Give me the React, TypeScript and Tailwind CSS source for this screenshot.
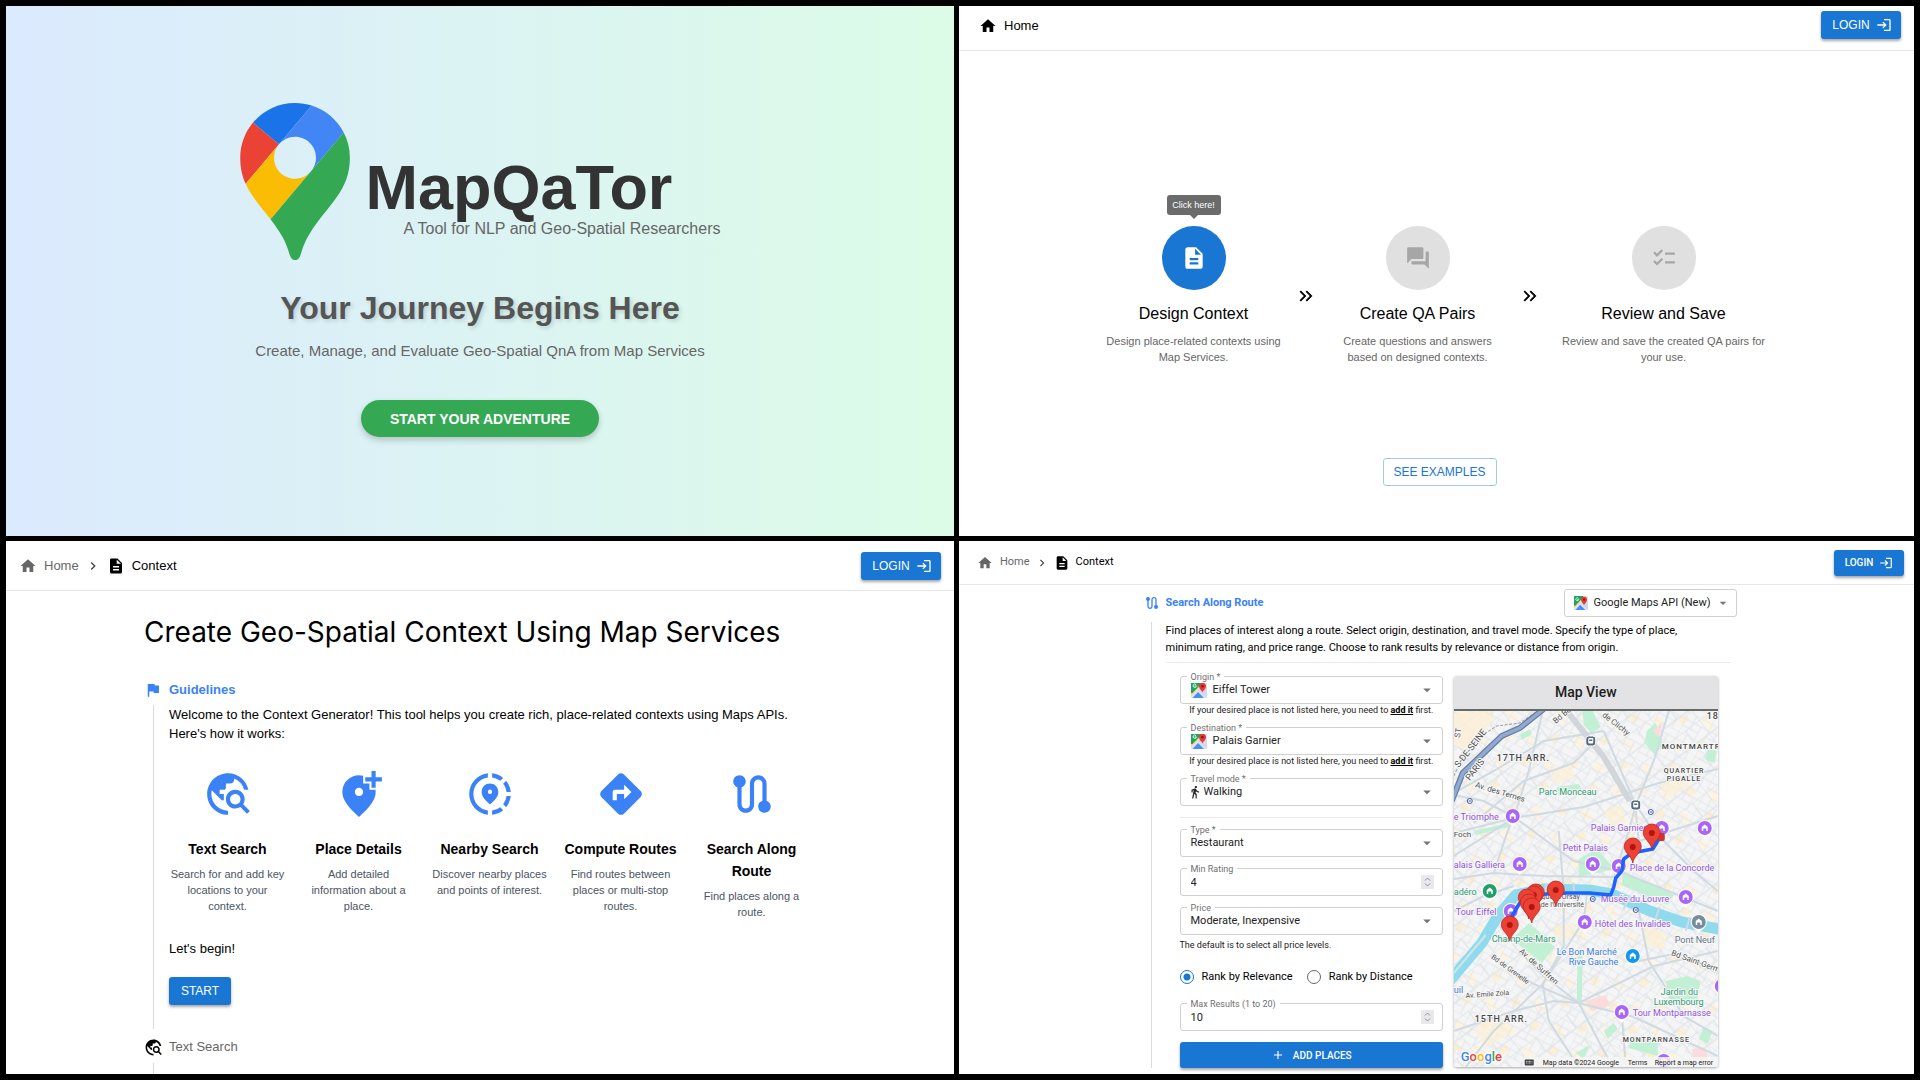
import React from "react";
import type { ReactNode } from "react";
import type { IconType } from "react-icons";
import {
  MdAdd,
  MdAddLocationAlt,
  MdArrowDropDown,
  MdChecklist,
  MdChevronRight,
  MdDescription,
  MdDirections,
  MdDirectionsWalk,
  MdFlag,
  MdHome,
  MdKeyboardDoubleArrowRight,
  MdLogin,
  MdQuestionAnswer,
  MdRoute,
  MdShareLocation,
  MdTravelExplore,
} from "react-icons/md";

/* ---------- Welcome ---------- */

function PinLogo() {
  return (
    <svg viewBox="0 0 92.3 132.3" className="h-[157px] w-[110px] shrink-0" aria-hidden="true">
      <path fill="#1a73e8" d="M60.2 2.2C55.8.8 51 0 46.1 0 32 0 19.3 6.4 10.8 16.5l21.8 18.3L60.2 2.2z" />
      <path fill="#ea4335" d="M10.8 16.5C4.1 24.5 0 34.9 0 46.1c0 8.7 1.7 15.7 4.6 22l28-33.3-21.8-18.3z" />
      <path fill="#4285f4" d="M46.2 28.5c9.8 0 17.7 7.9 17.7 17.7 0 4.3-1.6 8.3-4.2 11.4 0 0 13.9-16.6 27.5-32.7-5.6-10.8-15.3-19-27-22.7L32.6 34.8c3.3-3.8 8.1-6.3 13.6-6.3" />
      <path fill="#fbbc04" d="M46.2 63.8c-9.8 0-17.7-7.9-17.7-17.7 0-4.3 1.5-8.3 4.1-11.3l-28 33.3c4.8 10.6 12.8 19.2 21 29.9l34.1-40.5c-3.3 3.9-8.1 6.3-13.5 6.3" />
      <path fill="#34a853" d="M59.1 109.2c15.4-24.1 33.3-35 33.3-63 0-7.7-1.9-14.9-5.2-21.3L25.6 98c2.6 3.4 5.3 7.3 7.9 11.3 9.4 14.5 6.8 23.1 12.8 23.1s3.4-8.7 12.8-23.2" />
    </svg>
  );
}

function WelcomePanel() {
  return (
    <section className="flex min-h-0 flex-col items-center justify-center overflow-hidden bg-linear-to-r from-[#dbeafe] to-[#dcfce7] pb-[2px]">
      <div className="flex items-end gap-4">
        <PinLogo />
        <div className="pb-[21px]">
          <h1 className="text-[63px] leading-[64px] font-bold text-[#333]">MapQaTor</h1>
          <p className="ml-[38px] text-base leading-5 text-[#666]">A Tool for NLP and Geo-Spatial Researchers</p>
        </div>
      </div>
      <h2 className="mt-7 text-[32px] leading-10 font-bold text-[#555] [text-shadow:2px_2px_4px_rgba(0,0,0,0.15)]">
        Your Journey Begins Here
      </h2>
      <p className="mt-[11px] mb-px text-[15px] leading-6 text-[#666]">
        Create, Manage, and Evaluate Geo-Spatial QnA from Map Services
      </p>
      <button className="mt-9 h-[37px] w-[238px] rounded-full bg-[#34a853] text-sm font-bold text-white shadow-[0_3px_6px_rgba(0,0,0,0.2)]">
        START YOUR ADVENTURE
      </button>
    </section>
  );
}

/* ---------- Shared navigation ---------- */

function LoginButton({ compact = false }: { compact?: boolean }) {
  return (
    <button
      className={
        "flex items-center justify-center rounded-[3px] bg-[#1976d2] text-white shadow-[0_2px_3px_rgba(0,0,0,0.35)] " +
        (compact ? "h-[26px] w-[70px] gap-[6px] text-[10px] font-medium" : "h-7 w-20 gap-[6px] pl-[2px] text-xs")
      }
    >
      LOGIN
      <MdLogin className={compact ? "size-[14px]" : "size-4"} aria-hidden="true" />
    </button>
  );
}

function HomePanel() {
  return (
    <section className="flex min-h-0 flex-col overflow-hidden bg-white">
      <header className="flex h-[45px] shrink-0 items-center justify-between border-b border-[#e5e7eb] pr-[13px] pl-5">
        <a href="#home" className="flex items-center gap-[7px] pb-1 text-[13px] text-black">
          <MdHome className="size-[18px]" aria-hidden="true" />
          Home
        </a>
        <div className="pb-[6px]">
          <LoginButton />
        </div>
      </header>
      <div className="flex flex-col items-center pt-[175px] pl-[6px]">
        <div className="flex items-center">
          <Step icon={MdDescription} title="Design Context" text={"Design place-related contexts using\nMap Services."} tip="Click here!" />
          <MdKeyboardDoubleArrowRight className="size-6 p-px text-black" aria-hidden="true" />
          <Step icon={MdQuestionAnswer} title="Create QA Pairs" text={"Create questions and answers\nbased on designed contexts."} />
          <MdKeyboardDoubleArrowRight className="size-6 p-px text-black" aria-hidden="true" />
          <Step wide icon={MdChecklist} title="Review and Save" text={"Review and save the created QA pairs for\nyour use."} />
        </div>
        <button className="mt-[93px] h-7 w-[114px] rounded-[3px] border border-[#a3c8ed] text-xs text-[#1976d2]">
          SEE EXAMPLES
        </button>
      </div>
    </section>
  );
}

function Step({ icon: Icon, title, text, tip, wide = false }: { icon: IconType; title: string; text: string; tip?: string; wide?: boolean }) {
  return (
    <div className={"flex flex-col items-center " + (wide ? "w-[244px]" : "w-[200px]")}>
      <div className="relative">
        <button
          aria-label={title}
          disabled={!tip}
          className={
            "flex size-16 items-center justify-center rounded-full " +
            (tip ? "bg-[#1976d2] text-white" : "bg-[#e0e0e0] text-[#a6a6a6]")
          }
        >
          <Icon className="size-[26px]" aria-hidden="true" />
        </button>
        {tip && (
          <div role="tooltip" className="absolute bottom-[75px] left-1/2 w-[54px] -translate-x-1/2 rounded-[3px] bg-[#6b6b6b] text-center text-[9px] leading-5 whitespace-nowrap text-white after:absolute after:top-full after:left-1/2 after:-translate-x-1/2 after:border-x-4 after:border-t-4 after:border-x-transparent after:border-t-[#6b6b6b]">
            {tip}
          </div>
        )}
      </div>
      <h3 className="mt-3 text-base leading-6 text-black">{title}</h3>
      <p className="mt-[7px] text-center text-[11px] leading-4 whitespace-pre-line text-[#666]">{text}</p>
    </div>
  );
}

/* ---------- Context guidelines ---------- */

const TOOLS: { icon: IconType; title: string; text: string }[] = [
  { icon: MdTravelExplore, title: "Text Search", text: "Search for and add key locations to your context." },
  { icon: MdAddLocationAlt, title: "Place Details", text: "Add detailed information about a place." },
  { icon: MdShareLocation, title: "Nearby Search", text: "Discover nearby places and points of interest." },
  { icon: MdDirections, title: "Compute Routes", text: "Find routes between places or multi-stop routes." },
  { icon: MdRoute, title: "Search Along Route", text: "Find places along a route." },
];

function GuidelinesPanel() {
  return (
    <section className="flex min-h-0 flex-col overflow-hidden bg-white">
      <header className="flex h-[50px] shrink-0 items-center justify-between border-b border-[#e5e7eb] px-[13px]">
        <nav aria-label="Breadcrumb" className="flex items-center text-[13px]">
          <a href="#home" className="flex items-center gap-[7px] text-[#666]">
            <MdHome className="size-[18px]" aria-hidden="true" />
            Home
          </a>
          <MdChevronRight className="mx-[6px] size-4 text-[#444]" aria-hidden="true" />
          <a href="#context" className="flex items-center gap-[7px] text-black">
            <MdDescription className="size-[18px]" aria-hidden="true" />
            Context
          </a>
        </nav>
        <LoginButton />
      </header>
      <div className="mx-auto w-full max-w-[672px] pt-[21px]">
        <h1 className="text-[28px] leading-10 whitespace-nowrap text-black font-['Inter',sans-serif]">
          Create Geo-Spatial Context Using Map Services
        </h1>
        <div className="mt-7 flex h-5 items-center gap-[7px] text-[13px] font-bold text-[#3b82f6]">
          <MdFlag className="size-[18px]" aria-hidden="true" />
          <h2>Guidelines</h2>
        </div>
        <div className="mt-[5px] ml-[9px] border-l border-[#dadada] pb-6 pl-[15px] text-[13px] text-black">
          <p className="leading-[19px]">
            Welcome to the Context Generator! This tool helps you create rich, place-related contexts using Maps APIs.
            <br />
            Here&#39;s how it works:
          </p>
          <div className="mt-[26px] mr-[6px] grid grid-cols-5 gap-[14px]">
            {TOOLS.map(({ icon: Icon, title, text }) => (
              <div key={title} className="flex flex-col items-center text-center">
                <Icon className="size-[50px] text-[#3b82f6]" aria-hidden="true" />
                <h3 className="mt-[19px] text-sm leading-[22px] font-bold">{title}</h3>
                <p className="mt-[6px] text-[11px] leading-4 text-[#4b5563]">{text}</p>
              </div>
            ))}
          </div>
          <p className="mt-[19px] leading-5">Let&#39;s begin!</p>
          <button className="mt-[18px] block h-7 w-[62px] rounded-[3px] bg-[#1976d2] text-xs text-white shadow-[0_2px_3px_rgba(0,0,0,0.35)]">
            START
          </button>
        </div>
        <div className="mt-2 flex h-5 items-center gap-[6px] text-[13px] text-[#666]">
          <MdTravelExplore className="size-[19px] text-black" aria-hidden="true" />
          <h2>Text Search</h2>
        </div>
        <div className="mt-[6px] ml-[9px] h-8 border-l border-[#dadada]" />
      </div>
    </section>
  );
}

/* ---------- Route search ---------- */

function MapsBadge({ className }: { className: string }) {
  return (
    <svg viewBox="0 0 32 32" className={className} aria-hidden="true">
      <rect width="32" height="32" rx="2" fill="#dfe3f3" />
      <path d="M0 2a2 2 0 0 1 2-2h20L0 22z" fill="#1fa463" />
      <path d="M0 20 20 0h7L0 28z" fill="#fbd75b" />
      <path d="M0 2a2 2 0 0 1 2-2h19v3L3 22H0z" fill="#1fa463" />
      <path d="M3 32 14 20l12 12z" fill="#4a8df6" />
      <path d="M14 16 32 32V12L22 8z" fill="#d3d8ee" />
      <path d="M10 5.200a3.300 3.300 0 1 0 .8 2.600H7.500" fill="none" stroke="#fff" strokeWidth="1.800" />
      <path d="M23 21c-1-4-7-7-7-12.500a7 7 0 0 1 14 0C30 14 24 17 23 21z" fill="#e53935" />
      <circle cx="23" cy="8.500" r="2.600" fill="#8f1a1a" />
    </svg>
  );
}

function Outlined({ id, label, children }: { id: string; label: string; children: ReactNode }) {
  return (
    <div className="relative flex h-7 items-center rounded-[3px] border border-[#d0d0d0] px-[10px]">
      <label htmlFor={id} className="absolute -top-[6px] left-[6px] bg-white px-1 text-[9px] leading-3 text-[#707070]">
        {label}
      </label>
      {children}
    </div>
  );
}

function SelectField({ id, label, value, icon }: { id: string; label: string; value: string; icon?: ReactNode }) {
  return (
    <Outlined id={id} label={label}>
      {icon}
      <select id={id} defaultValue={value} className="h-full min-w-0 flex-1 appearance-none bg-transparent text-[11px] text-[#222] outline-none">
        <option>{value}</option>
      </select>
      <MdArrowDropDown className="pointer-events-none -mr-1 size-[18px] text-[#757575]" aria-hidden="true" />
    </Outlined>
  );
}

function NumberField({ id, label, value }: { id: string; label: string; value: number }) {
  return (
    <Outlined id={id} label={label}>
      <input id={id} type="number" defaultValue={value} className="h-full min-w-0 flex-1 [appearance:textfield] bg-transparent text-[11px] text-[#222] outline-none" />
      <svg viewBox="0 0 13 14" className="-mr-[2px] h-[14px] w-[13px]" aria-hidden="true">
        <rect width="13" height="14" fill="#e9e9ed" />
        <path d="M4 5.500 6.500 3 9 5.500M4 8.500 6.500 11 9 8.500" fill="none" stroke="#8f8f9d" />
      </svg>
    </Outlined>
  );
}

function PlaceHint() {
  return (
    <p className="mb-[11px] text-center text-[9px] leading-3 whitespace-nowrap text-[#222]">
      If your desired place is not listed here, you need to{" "}
      <a href="#add-place" className="font-bold text-black underline">
        add it
      </a>{" "}
      first.
    </p>
  );
}

function RankOption({ label, checked = false }: { label: string; checked?: boolean }) {
  return (
    <label className="flex items-center gap-2 text-[11px] text-black">
      <input
        type="radio"
        name="rank"
        defaultChecked={checked}
        className="size-[14px] appearance-none rounded-full border border-[#666] checked:border-[#1976d2] checked:bg-[radial-gradient(circle,#1976d2_3px,transparent_4px)]"
      />
      {label}
    </label>
  );
}

const MAJOR_ROADS = [
  "M0 122 60 107 130 96 205 72 264 58",
  "M0 82 40 60 90 30 150 20",
  "M20 112 70 70 120 52 142 30",
  "M0 168 40 162 90 165 160 166",
  "M40 162 59 105 30 90 0 84",
  "M59 105 120 150 165 160 264 200",
  "M160 166 175 120 182 94 200 50 215 0",
  "M150 20 182 94 200 120 240 160 264 180",
  "M113 0 160 58 182 100 185 130",
  "M0 145 60 107 75 60 89 0",
  "M37 245 80 273 125 292 180 306 264 345",
  "M65 240 90 265 125 292 150 340 160 356",
  "M89 273 130 210 133 184",
  "M0 320 60 300 100 290 125 292 200 255 264 240",
  "M89 273 95 310 125 356",
  "M185 200 195 250 230 305 264 325",
  "M168 300 172 356",
  "M185 250 220 243 264 262",
  "M105 120 110 180 110 235 89 273",
  "M185 130 264 105",
  "M0 200 30 185 60 175",
  "M12 356 40 320 89 273",
];

const PURPLE_PINS: [number, number][] = [
  [59, 105],
  [208, 117],
  [251, 117],
  [139, 153],
  [165, 155],
  [66, 153],
  [232, 186],
  [57, 200],
  [131, 211],
  [168, 301],
  [268, 275],
  [210, 350],
];

const MARKERS: [number, number][] = [
  [198, 122],
  [179, 136],
  [102, 179],
  [82, 182],
  [80, 184],
  [73, 187],
  [75, 192],
  [78, 196],
  [56, 214],
];

function PoiPin({ x, y, color }: { x: number; y: number; color: string }) {
  return (
    <g transform={`translate(${x} ${y})`}>
      <path d="M0 11C-2 8-8 6-8 0a8 8 0 0 1 16 0C8 6 2 8 0 11z" fill="#fff" />
      <circle r="7" fill={color} />
      <path d="M-3 3V-1L0-3.500 3-1V3H1.500V0.500H-1.500V3z" fill="#fff" />
    </g>
  );
}

function ParisMap() {
  return (
    <svg viewBox="0 0 264 356" preserveAspectRatio="xMidYMid slice" className="block h-[356px] w-full font-['Roboto',sans-serif]" role="img" aria-label="Map of Paris with route and places">
      <defs>
        <pattern id="blocksA" width="26" height="22" patternUnits="userSpaceOnUse" patternTransform="rotate(28)">
          <path d="M0 0H26M0 8H26M0 15H18M0 0V22M9 0V15M18 8V22" fill="none" stroke="#dfe4ea" strokeWidth="0.900" />
        </pattern>
        <pattern id="blocksB" width="38" height="31" patternUnits="userSpaceOnUse" patternTransform="rotate(-37)">
          <path d="M0 0H38M0 17H38M0 0V31M21 0V17" fill="none" stroke="#d9dfe6" />
          <rect x="22" y="18" width="9" height="7" fill="#fcefd4" />
          <rect x="2" y="2" width="7" height="12" fill="#fdf3df" />
        </pattern>
      </defs>
      <rect width="264" height="356" fill="#f5f5f5" />
      <rect width="264" height="356" fill="url(#blocksB)" />
      <rect width="264" height="356" fill="url(#blocksA)" />

      <g fill="#fcefd4">
        <path d="M0 3 30 0 42 8 10 38 0 34z" opacity="0.800" />
        <path d="M95 60l22-6 4 12-20 8zM206 70l24-8 6 14-22 10zM150 100l18-6 5 18-16 4zM20 318l26-14 10 18-24 16zM100 215l20-3 2 14-18 4zM188 215l26 8-4 16-20-6z" opacity="0.700" />
      </g>
      <g fill="#c2f0d4">
        <path d="M129 0h10l8 16-9 6-8-8z" />
        <path d="M193 20 202 12 210 35 200 43 191 32z" />
        <path d="M253 38l10 2-2 12-9-3z" />
        <path d="M66 24l10-6 2 5-10 6z" />
        <path d="M103 76l22-3 4 8-24 4z" />
        <path d="M20 120l35-8v4l-33 8z" />
        <path d="M125 148l18-10 18 20-36 8z" />
        <path d="M169 160 220 184 214 194 168 174z" />
        <path d="M58 228 76 212 101 236 88 252z" />
        <path d="M212 270 234 265 247 270 243 290 216 292z" />
        <path d="M178 325 204 331 204 345 175 337z" />
        <path d="M124 240h5l-1 50h-5z" />
        <path d="M250 316l9 4-5 13-9-5z" />
        <path d="M150 320l10-8 4 6-10 10z" />
        <path d="M122 342l14-8-6 14z" />
      </g>
      <g fill="#fbdcdc">
        <path d="M199 20 208 11 206 26z" />
        <path d="M131 290 152 284 156 295 138 300z" />
        <path d="M238 338l14-2 2 12-14 3z" />
      </g>

      <g fill="none" stroke="#d0dae3" strokeWidth="2">
        {MAJOR_ROADS.map((d) => (
          <path key={d} d={d} />
        ))}
      </g>
      <path d="M113 0 150 46 176 90" fill="none" stroke="#d2d6da" strokeWidth="6" />

      <path d="M-6 272 28 232 44 205 62 184 90 178 135 179 158 183 196 200 228 211 270 219" fill="none" stroke="#90daee" strokeWidth="11" strokeLinejoin="round" />
      <path d="M0 262 32 224" fill="none" stroke="#cfe5e9" strokeWidth="2" />
      <g stroke="#d0dae3" strokeWidth="2">
        <path d="M92 172v14M120 172v14M176 184l-6 14M206 196l-5 14M236 206l-4 14" />
      </g>

      <path d="M-2 90 9 62 48 25 66 17 90-2" fill="none" stroke="#647fab" strokeWidth="6" />
      <path d="M-2 90 9 62 48 25 66 17 90-2" fill="none" stroke="#93a9ce" strokeWidth="3.500" />
      <path d="M0 65 16 32 43 15 66 12 84 0" fill="none" stroke="#777" strokeWidth="0.700" strokeDasharray="3 1.500" />

      <g fill="#555" stroke="#f7f7f7" strokeWidth="2" paintOrder="stroke" fontSize="8">
        <text transform="translate(5 57) rotate(-52)" fontSize="9">S-DE-SEINE</text>
        <text transform="translate(16 70) rotate(-52)" fontSize="9">PARIS</text>
        <text transform="translate(6 27) rotate(-80)">ST</text>
        <text transform="translate(102 13) rotate(-40)">Bd Be</text>
        <text transform="translate(148 5) rotate(38)">de Clichy</text>
        <text transform="translate(21 76) rotate(17)">Av. des Ternes</text>
        <text x="0" y="126">Foch</text>
        <text x="87" y="188" fontSize="7">Quai d&#39;Orsay</text>
        <text x="87" y="196" fontSize="7">de l&#39;Université</text>
        <text transform="translate(65 241) rotate(42)" fontSize="8">Av. de Suffren</text>
        <text transform="translate(37 247) rotate(36)" fontSize="7">Bd de Grenelle</text>
        <text transform="translate(12 287) rotate(-4)" fontSize="7">Av. Emile Zola</text>
        <text transform="translate(217 244) rotate(20)" fontSize="8">Bd Saint-Germ</text>
      </g>
      <g fill="#484848" stroke="#f7f7f7" strokeWidth="2" paintOrder="stroke" fontWeight="500" letterSpacing="1">
        <text x="253" y="8" fontSize="9">18</text>
        <text x="43" y="50" fontSize="9">17TH ARR.</text>
        <text x="208" y="38" fontSize="8">MONTMARTRE</text>
        <text x="210" y="62" fontSize="7">QUARTIER</text>
        <text x="213" y="70" fontSize="7">PIGALLE</text>
        <text x="21" y="311" fontSize="9">15TH ARR.</text>
        <text x="169" y="331" fontSize="7">MONTPARNASSE</text>
      </g>
      <g stroke="#f7f7f7" strokeWidth="2" paintOrder="stroke" fontSize="9">
        <g fill="#2f9a74">
          <text x="85" y="84">Parc Monceau</text>
          <text x="0" y="184">adéro</text>
          <text x="38" y="231">Champ-de-Mars</text>
          <text x="207" y="284">Jardin du</text>
          <text x="200" y="294">Luxembourg</text>
        </g>
        <g fill="#9254de">
          <text x="0" y="109">e Triomphe</text>
          <text x="137" y="120">Palais Garnier</text>
          <text x="109" y="140">Petit Palais</text>
          <text x="0" y="157">alais Galliera</text>
          <text x="176" y="160">Place de la Concorde</text>
          <text x="147" y="191">Musée du Louvre</text>
          <text x="2" y="204">Tour Eiffel</text>
          <text x="141" y="216">Hôtel des Invalides</text>
          <text x="179" y="305">Tour Montparnasse</text>
        </g>
        <g fill="#3b7ee0">
          <text x="103" y="244">Le Bon Marché</text>
          <text x="115" y="254">Rive Gauche</text>
          <text x="0" y="282">uil</text>
        </g>
        <text x="221" y="232" fill="#64788a">Pont Neuf</text>
      </g>

      {PURPLE_PINS.map(([x, y]) => (
        <PoiPin key={`${x}-${y}`} x={x} y={y} color="#a966f5" />
      ))}
      <PoiPin x={36} y={180} color="#1fa06a" />
      <PoiPin x={179} y={245} color="#1296f0" />
      <PoiPin x={245} y={211} color="#788d99" />

      {[
        [137, 30],
        [182, 94],
      ].map(([x, y]) => (
        <g key={x} transform={`translate(${x} ${y})`}>
          <rect x="-5" y="-5" width="10" height="10" rx="3" fill="#566a80" stroke="#fff" />
          <rect x="-2.500" y="-3" width="5" height="5.500" rx="1" fill="#fff" />
          <path d="M-1.500-1.500h3v1.500h-3z" fill="#566a80" />
        </g>
      ))}
      {[
        [16, 90],
        [197, 101],
        [139, 188],
        [182, 199],
      ].map(([x, y]) => (
        <g key={x} transform={`translate(${x} ${y})`}>
          <circle r="2.500" fill="#fff" stroke="#4653a8" />
          <path d="M-1.200 0h2.400" stroke="#4653a8" />
        </g>
      ))}

      <path d="M57 207 66 192 76 185 101 182 136 182 157 184 160 176 162 167 168 160 170 148 178 142 199 138 204 130 208 125" fill="none" stroke="#1f62fb" strokeWidth="3.500" strokeLinejoin="round" />
      <rect x="204" y="122" width="7" height="8" rx="2" fill="#d0312a" />
      {MARKERS.map(([x, y]) => (
        <g key={`${x}-${y}`} transform={`translate(${x} ${y})`}>
          <path d="M0 16C-1 9-8.500 6-8.500-.500a8.500 8.500 0 0 1 17 0C8.500 6 1 9 0 16z" fill="#ea4335" stroke="#c5221f" strokeWidth="0.800" />
          <circle r="3" fill="#b31412" />
        </g>
      ))}

      <rect x="70" y="346" width="194" height="10" fill="#f5f5f5" opacity="0.850" />
      <text x="7" y="350" fontSize="13" fontWeight="500" stroke="#fff" strokeWidth="2" paintOrder="stroke">
        <tspan fill="#4285f4">G</tspan>
        <tspan fill="#ea4335">o</tspan>
        <tspan fill="#fbbc04">o</tspan>
        <tspan fill="#4285f4">g</tspan>
        <tspan fill="#34a853">l</tspan>
        <tspan fill="#ea4335">e</tspan>
      </text>
      <rect x="71" y="348.500" width="9" height="6" rx="0.800" fill="#444" />
      <path d="M72.500 350.500h6M72.500 352h6" stroke="#fff" strokeWidth="0.800" strokeDasharray="0.800 0.600" />
      <g fill="#222" fontSize="7">
        <text x="89" y="354">Map data ©2024 Google</text>
        <text x="174" y="354">Terms</text>
        <text x="201" y="354">Report a map error</text>
      </g>
    </svg>
  );
}

function RoutePanel() {
  return (
    <section className="flex min-h-0 flex-col overflow-hidden bg-white font-['Roboto',sans-serif]">
      <header className="flex h-11 shrink-0 items-center justify-between border-b border-[#e5e7eb] pr-[10px] pl-[18px]">
        <nav aria-label="Breadcrumb" className="flex items-center text-[11px]">
          <a href="#home" className="flex items-center gap-[7px] text-[#666]">
            <MdHome className="size-4" aria-hidden="true" />
            Home
          </a>
          <MdChevronRight className="mx-[5px] size-[14px] text-[#444]" aria-hidden="true" />
          <a href="#context" className="flex items-center gap-[6px] text-black">
            <MdDescription className="size-4" aria-hidden="true" />
            Context
          </a>
        </nav>
        <LoginButton compact />
      </header>
      <div className="flex flex-col items-center pt-1 pl-2">
        <div className="w-full max-w-[592px]">
          <div className="flex h-7 items-center justify-between">
            <div className="flex items-center gap-[6px] text-[11px] font-bold text-[#3b82f6]">
              <MdRoute className="-ml-px size-4" aria-hidden="true" />
              <h2>Search Along Route</h2>
            </div>
            <div className="flex h-7 w-[173px] items-center rounded-[3px] border border-[#d0d0d0] pr-[5px] pl-[9px]">
              <MapsBadge className="mr-[6px] size-[14px] shrink-0" />
              <select aria-label="Map service" className="min-w-0 flex-1 appearance-none bg-transparent text-[11px] text-[#222] outline-none">
                <option>Google Maps API (New)</option>
              </select>
              <MdArrowDropDown className="pointer-events-none size-4 shrink-0 text-[#757575]" aria-hidden="true" />
            </div>
          </div>
          <div className="mt-[5px] ml-[6px] border-l border-[#dadada] pr-[6px] pl-[14px]">
            <p className="text-[11px] leading-[17px] text-black">
              Find places of interest along a route. Select origin, destination, and travel mode. Specify the type of place,
              <br />
              minimum rating, and price range. Choose to rank results by relevance or distance from origin.
            </p>
            <hr className="mt-[6px] border-[#ececec]" />
            <div className="mt-[13px] mr-[13px] ml-[14px] grid grid-cols-2 gap-[11px]">
              <form onSubmit={(e) => e.preventDefault()}>
                <SelectField id="origin" label="Origin *" value="Eiffel Tower" icon={<MapsBadge className="mr-[6px] size-4 shrink-0" />} />
                <PlaceHint />
                <SelectField id="destination" label="Destination *" value="Palais Garnier" icon={<MapsBadge className="mr-[6px] size-4 shrink-0" />} />
                <PlaceHint />
                <SelectField id="mode" label="Travel mode *" value="Walking" icon={<MdDirectionsWalk className="-ml-[3px] mr-[2px] size-[14px] shrink-0 text-[#222]" aria-hidden="true" />} />
                <hr className="my-[11px] border-[#ececec]" />
                <div className="flex flex-col gap-[11px]">
                  <SelectField id="type" label="Type *" value="Restaurant" />
                  <NumberField id="rating" label="Min Rating" value={4} />
                  <SelectField id="price" label="Price" value="Moderate, Inexpensive" />
                </div>
                <p className="mt-1 text-[9px] leading-3 text-[#222]">The default is to select all price levels.</p>
                <div className="my-[18px] flex h-4 items-center gap-[14px]">
                  <RankOption label="Rank by Relevance" checked />
                  <RankOption label="Rank by Distance" />
                </div>
                <NumberField id="max" label="Max Results (1 to 20)" value={10} />
                <button className="mt-[11px] flex h-[26px] w-full items-center justify-center gap-2 rounded-[3px] bg-[#1976d2] text-[10px] font-medium text-white shadow-[0_2px_3px_rgba(0,0,0,0.35)]">
                  <MdAdd className="size-[14px]" aria-hidden="true" />
                  ADD PLACES
                </button>
              </form>
              <div className="self-start overflow-hidden rounded-[3px] shadow-[0_1px_3px_rgba(0,0,0,0.35)]">
                <h3 className="border-b-2 border-[#666b66] bg-[#e3e3e5] text-center text-sm leading-[33px] font-medium text-[#1c1c1c]">Map View</h3>
                <ParisMap />
              </div>
            </div>
          </div>
        </div>
      </div>
    </section>
  );
}

export default function App() {
  return (
    <main className="grid h-screen grid-cols-[948fr_955fr] grid-rows-[530fr_533fr] gap-[5px] overflow-hidden bg-black p-[6px] font-['Liberation_Sans',Arial,sans-serif]">
      <WelcomePanel />
      <HomePanel />
      <GuidelinesPanel />
      <RoutePanel />
    </main>
  );
}
